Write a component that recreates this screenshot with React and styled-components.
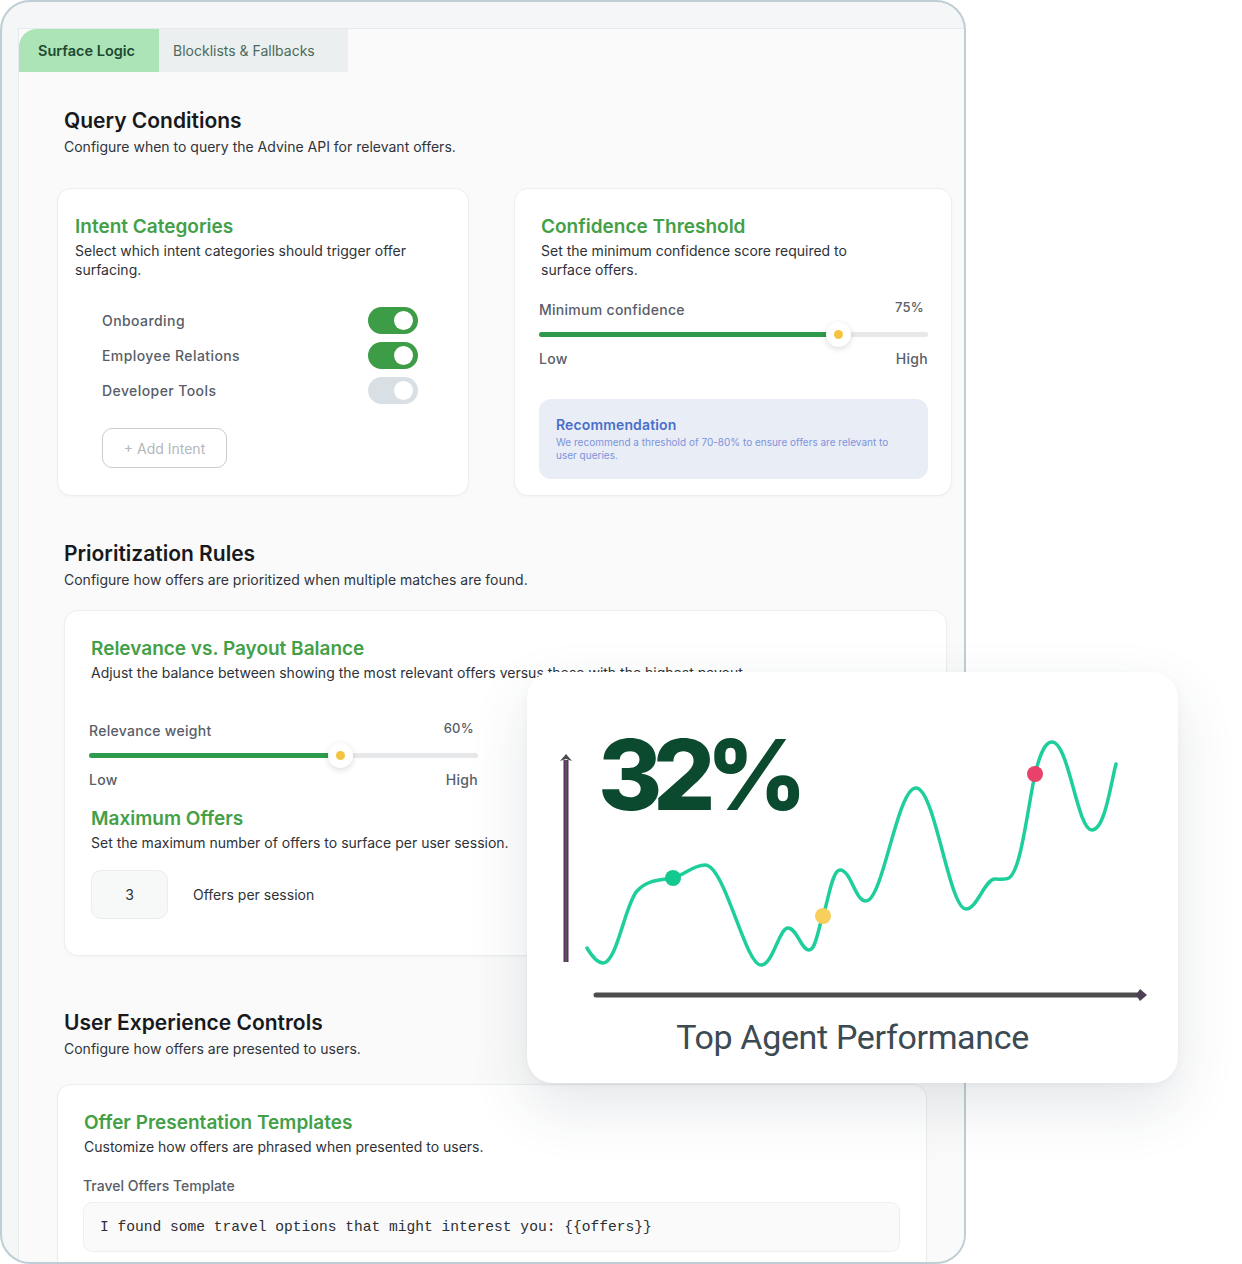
import styled, { createGlobalStyle } from "styled-components";

const GlobalStyle = createGlobalStyle`
  * { box-sizing: border-box; }
  body {
    margin: 0;
    background: #ffffff;
    font-family: Inter, "Noto Sans", Arial, sans-serif;
    color: #1c1f23;
  }
`;

const Page = styled.div`
  position: relative;
  width: 1242px;
  height: 1264px;
  overflow: hidden;
`;

const Frame = styled.div`
  width: 966px;
  height: 1264px;
  border: 2px solid #bfcdd4;
  border-radius: 30px;
  background: #f5f6f7;
  padding: 26px 0 0 16px;
  overflow: hidden;
`;

const Panel = styled.div`
  height: 100%;
  background: #fafafa;
  border-top: 1px solid #e4e9eb;
  border-left: 1px solid #e4e9eb;
`;

const Tabs = styled.div`
  display: flex;
  height: 43px;
`;

const Tab = styled.div`
  display: flex;
  align-items: center;
  width: ${(p) => p.$width}px;
  padding-left: ${(p) => p.$pad}px;
  font-size: ${(p) => (p.$active ? "14.5px" : "14px")};
  font-weight: ${(p) => (p.$active ? 600 : 400)};
  color: ${(p) => (p.$active ? "#1d4a30" : "#4b6a5a")};
  background: ${(p) => (p.$active ? "#ade4b7" : "#ebeff0")};
  border-top-left-radius: ${(p) => (p.$active ? "18px" : "0")};
`;

const Content = styled.div`
  padding: 36px 0 0 45px;
`;

const Section = styled.section`
  margin-top: ${(p) => p.$top || 0}px;
`;

const SectionTitle = styled.h2`
  margin: 0;
  font-size: 21px;
  line-height: 26px;
  font-weight: 600;
  color: #17191c;
`;

const SectionSub = styled.p`
  margin: 3px 0 0;
  font-size: 14px;
  line-height: 20px;
  color: #30343a;
`;

const CardRow = styled.div`
  display: grid;
  grid-template-columns: 412px 438px;
  column-gap: 45px;
  margin: 31px 0 0 -7px;
`;

const Card = styled.div`
  width: ${(p) => (p.$width ? `${p.$width}px` : "auto")};
  margin-top: ${(p) => p.$top || 0}px;
  margin-left: ${(p) => p.$shift || 0}px;
  padding: 26px ${(p) => p.$padX || 17}px ${(p) => p.$padBottom || 16}px;
  background: #ffffff;
  border: 1px solid #eceef0;
  border-radius: 14px;
  box-shadow: 0 1px 3px rgba(20, 30, 40, 0.03);
`;

const CardTitle = styled.h3`
  margin: 0;
  font-size: 19px;
  line-height: 24px;
  font-weight: 600;
  color: #43a047;
  margin-top: ${(p) => p.$top || 0}px;
`;

const CardDesc = styled.p`
  margin: 2px 0 0;
  font-size: 14px;
  line-height: 19px;
  color: #2e3238;
  max-width: ${(p) => (p.$narrow ? "350px" : "none")};
`;

const ToggleList = styled.div`
  display: flex;
  flex-direction: column;
  gap: 9px;
  margin-top: 28px;
  padding: 0 33px 0 27px;
`;

const ToggleRow = styled.div`
  display: flex;
  align-items: center;
  justify-content: space-between;
  height: 26px;
  font-size: 14px;
  font-weight: 500;
  color: #585d68;
  letter-spacing: 0.03em;
`;

const Switch = styled.div`
  position: relative;
  width: 50px;
  height: 27px;
  border-radius: 14px;
  background: ${(p) => (p.$on ? "#3d9c46" : "#d8e0e6")};

  &::after {
    content: "";
    position: absolute;
    top: 4px;
    right: 5px;
    width: 19px;
    height: 19px;
    border-radius: 50%;
    background: #ffffff;
  }
`;

const AddButton = styled.button`
  display: block;
  margin: 25px 0 0 27px;
  width: 125px;
  height: 40px;
  border: 1px solid #c9cdd1;
  border-radius: 10px;
  background: #ffffff;
  font-family: inherit;
  font-size: 14px;
  color: #b3b7bb;
`;

const SliderBlock = styled.div`
  width: 389px;
  margin-top: ${(p) => p.$top || 0}px;
  margin-left: -2px;
`;

const SliderHead = styled.div`
  display: flex;
  justify-content: space-between;
  align-items: flex-start;
  height: 20px;
  font-size: 14px;
  line-height: 20px;
  font-weight: 500;
  color: #585d68;
  letter-spacing: 0.02em;

  span:last-child {
    font-size: 13px;
    line-height: 14px;
    padding-right: 4px;
  }
`;

const Track = styled.div`
  position: relative;
  height: 24px;
  margin-top: 2px;

  &::before {
    content: "";
    position: absolute;
    left: 0;
    right: 0;
    top: 10px;
    height: 5px;
    border-radius: 3px;
    background: #e7e8e9;
  }
`;

const Fill = styled.div`
  position: absolute;
  left: 0;
  top: 10px;
  height: 5px;
  border-radius: 3px;
  background: #2e9b4c;
`;

const Thumb = styled.div`
  position: absolute;
  top: 0;
  width: 25px;
  height: 25px;
  margin-left: -12px;
  border-radius: 50%;
  background: #ffffff;
  box-shadow: 0 2px 6px rgba(0, 0, 0, 0.14);
  display: flex;
  align-items: center;
  justify-content: center;

  &::after {
    content: "";
    width: 9px;
    height: 9px;
    border-radius: 50%;
    background: #f4c340;
  }
`;

const SliderEnds = styled.div`
  display: flex;
  justify-content: space-between;
  margin-top: 3px;
  font-size: 14px;
  line-height: 20px;
  font-weight: 500;
  color: #585d68;
  letter-spacing: 0.02em;
`;

const Note = styled.div`
  margin: 30px 0 0 -2px;
  width: 389px;
  height: 80px;
  padding: 17px 17px;
  border-radius: 12px;
  background: #e9edf6;
`;

const NoteTitle = styled.div`
  font-size: 14px;
  line-height: 18px;
  font-weight: 600;
  color: #4a6fc9;
  letter-spacing: 0.01em;
`;

const NoteText = styled.div`
  margin-top: 2px;
  max-width: 340px;
  font-size: 10px;
  line-height: 13px;
  color: #7d93da;
`;

const CountRow = styled.div`
  display: flex;
  align-items: center;
  gap: 25px;
  margin-top: 18px;
  font-size: 14px;
  color: #2e3238;
`;

const CountBox = styled.div`
  display: flex;
  align-items: center;
  justify-content: center;
  width: 77px;
  height: 49px;
  border: 1px solid #eceeee;
  border-radius: 10px;
  background: #f7f8f8;
  font-size: 14px;
  color: #2e3238;
`;

const FieldLabel = styled.div`
  margin-top: ${(p) => p.$top || 0}px;
  font-size: 14px;
  line-height: 20px;
  font-weight: 500;
  color: #585d68;
  margin-left: -1px;
`;

const TemplateBox = styled.div`
  margin: 6px 0 0 -1px;
  height: 50px;
  padding: 0 16px;
  display: flex;
  align-items: center;
  border: 1px solid #eeeff0;
  border-radius: 9px;
  background: #fafafa;
  font-family: "Liberation Mono", "DejaVu Sans Mono", monospace;
  font-size: 14.6px;
  color: #2b2e33;
`;

const StatCard = styled.div`
  position: absolute;
  left: 527px;
  top: 672px;
  width: 651px;
  height: 411px;
  display: flex;
  flex-direction: column;
  align-items: center;
  padding: 53px 0 25px;
  border-radius: 26px;
  background: #ffffff;
  box-shadow: 0 24px 60px rgba(40, 60, 70, 0.12), 0 2px 8px rgba(0, 0, 0, 0.04);
  overflow: hidden;
`;

const Chart = styled.svg`
  position: absolute;
  inset: 0;
`;

const StatValue = styled.div`
  position: relative;
  align-self: flex-start;
  margin-left: 71px;
  font-size: 98px;
  line-height: 100px;
  font-weight: 800;
  color: #0c4a2f;
  letter-spacing: -0.095em;
`;

const StatCaption = styled.div`
  position: relative;
  margin-top: auto;
  font-family: Roboto, "Liberation Sans", sans-serif;
  font-size: 34px;
  line-height: 42px;
  color: #3c4a54;
  letter-spacing: -0.01em;
`;

const Slider = ({ label, value, top, fill }) => (
  <SliderBlock $top={top}>
    <SliderHead>
      <span>{label}</span>
      <span>{value}%</span>
    </SliderHead>
    <Track>
      <Fill style={{ width: `${fill}px` }} />
      <Thumb style={{ left: `${fill}px` }} />
    </Track>
    <SliderEnds>
      <span>Low</span>
      <span>High</span>
    </SliderEnds>
  </SliderBlock>
);

const intents = [
  { name: "Onboarding", on: true },
  { name: "Employee Relations", on: true },
  { name: "Developer Tools", on: false },
];

const wave =
  "M60,276 C66,286 71,291 76,291 C90,291 98,232 110,219 C120,208 132,208 146,206 " +
  "C158,203 166,193 178,193 C198,193 218,293 234,293 C246,293 252,256 261,256 " +
  "C270,256 274,278 282,278 C289,278 291,256 296,244 C301,230 305,198 313,198 " +
  "C324,198 328,229 339,229 C356,229 370,116 389,116 C408,116 422,237 439,237 " +
  "C450,237 458,207 468,207 C474,207 478,208 482,206 C494,198 500,140 508,102 " +
  "C513,82 518,70 525,70 C542,70 550,158 565,158 C578,158 584,110 589,92";

export default function App() {
  return (
    <Page>
      <GlobalStyle />
      <Frame>
        <Panel>
          <Tabs>
            <Tab $active $width={140} $pad={19}>Surface Logic</Tab>
            <Tab $width={189} $pad={14}>Blocklists &amp; Fallbacks</Tab>
          </Tabs>
          <Content>
            <Section>
              <SectionTitle>Query Conditions</SectionTitle>
              <SectionSub>Configure when to query the Advine API for relevant offers.</SectionSub>
              <CardRow>
                <Card>
                  <CardTitle>Intent Categories</CardTitle>
                  <CardDesc $narrow>
                    Select which intent categories should trigger offer surfacing.
                  </CardDesc>
                  <ToggleList>
                    {intents.map((item) => (
                      <ToggleRow key={item.name}>
                        {item.name}
                        <Switch $on={item.on} />
                      </ToggleRow>
                    ))}
                  </ToggleList>
                  <AddButton>+ Add Intent</AddButton>
                </Card>
                <Card $padX={26}>
                  <CardTitle>Confidence Threshold</CardTitle>
                  <CardDesc $narrow>
                    Set the minimum confidence score required to surface offers.
                  </CardDesc>
                  <Slider label="Minimum confidence" value={75} fill={299} top={21} />
                  <Note>
                    <NoteTitle>Recommendation</NoteTitle>
                    <NoteText>
                      We recommend a threshold of 70-80% to ensure offers are relevant to
                      user queries.
                    </NoteText>
                  </Note>
                </Card>
              </CardRow>
            </Section>

            <Section $top={45}>
              <SectionTitle>Prioritization Rules</SectionTitle>
              <SectionSub>Configure how offers are prioritized when multiple matches are found.</SectionSub>
              <Card $width={883} $top={20} $padX={26} $padBottom={36}>
                <CardTitle>Relevance vs. Payout Balance</CardTitle>
                <CardDesc>
                  Adjust the balance between showing the most relevant offers versus those with
                  the highest payout.
                </CardDesc>
                <Slider label="Relevance weight" value={60} fill={251} top={39} />
                <CardTitle $top={17}>Maximum Offers</CardTitle>
                <CardDesc>Set the maximum number of offers to surface per user session.</CardDesc>
                <CountRow>
                  <CountBox>3</CountBox>
                  Offers per session
                </CountRow>
              </Card>
            </Section>

            <Section $top={54}>
              <SectionTitle>User Experience Controls</SectionTitle>
              <SectionSub>Configure how offers are presented to users.</SectionSub>
              <Card $width={870} $top={25} $shift={-7} $padX={26}>
                <CardTitle>Offer Presentation Templates</CardTitle>
                <CardDesc>Customize how offers are phrased when presented to users.</CardDesc>
                <FieldLabel $top={20}>Travel Offers Template</FieldLabel>
                <TemplateBox>
                  I found some travel options that might interest you: {"{{offers}}"}
                </TemplateBox>
                <FieldLabel $top={8}>Retail Offers Template</FieldLabel>
              </Card>
            </Section>
          </Content>
        </Panel>
      </Frame>

      <StatCard>
        <Chart viewBox="0 0 651 411" width="651" height="411">
          <line x1="39" y1="88" x2="39" y2="290" stroke="#5b2a5e" strokeWidth="5" />
          <line x1="39" y1="88" x2="39" y2="290" stroke="#555558" strokeWidth="2.5" />
          <path d="M33,89 L39,82 L45,89 L39,87 Z" fill="#4f4a52" />
          <line
            x1="69"
            y1="323"
            x2="614"
            y2="323"
            stroke="#4d4d4f"
            strokeWidth="5"
            strokeLinecap="round"
          />
          <path d="M613,317 L620,323 L613,329 L609,323 Z" fill="#4f3f55" />
          <path d={wave} fill="none" stroke="#1fcf9b" strokeWidth="3.5" strokeLinecap="round" />
          <circle cx="146" cy="206" r="8" fill="#14c98f" />
          <circle cx="296" cy="244" r="8" fill="#f8cf5c" />
          <circle cx="508" cy="102" r="8" fill="#e8416a" />
        </Chart>
        <StatValue>32%</StatValue>
        <StatCaption>Top Agent Performance</StatCaption>
      </StatCard>
    </Page>
  );
}
